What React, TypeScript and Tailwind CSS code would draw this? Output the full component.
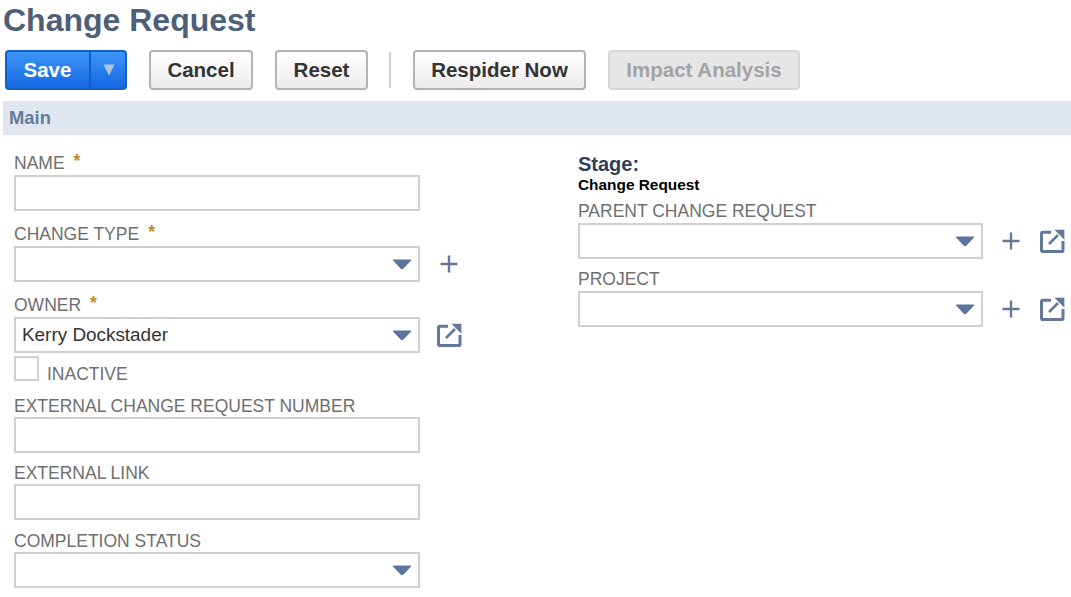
import React from "react";

const FONT = "font-['Liberation_Sans',Arial,sans-serif]";

function Caret() {
  return (
    <svg width="20" height="11" viewBox="0 0 20 11" className="shrink-0">
      <path d="M1 1.5 Q0.5 0.5 2 0.5 H18 Q19.5 0.5 19 1.5 L11.5 9.5 Q10 10.8 8.5 9.5 Z" fill="#5b759f" />
    </svg>
  );
}

function PlusIcon() {
  return (
    <svg width="18" height="18" viewBox="0 0 18 18" className="shrink-0">
      <path d="M9 0.5 V17.5 M0.5 9 H17.5" stroke="#64799a" strokeWidth="2.4" fill="none" />
    </svg>
  );
}

function OpenIcon() {
  return (
    <svg width="25" height="24" viewBox="0 0 25 24" className="shrink-0">
      <path
        d="M11 3.2 H2.8 Q1.5 3.2 1.5 4.5 V21.2 Q1.5 22.5 2.8 22.5 H21.7 Q23 22.5 23 21.2 V12"
        stroke="#64799a"
        strokeWidth="3"
        fill="none"
      />
      <path d="M9 15 L18 6" stroke="#64799a" strokeWidth="2.6" fill="none" />
      <path d="M14.5 0.8 H24.4 V10.7 Z" fill="#64799a" />
    </svg>
  );
}

function Label({ text, required, tight }: { text: string; required?: boolean; tight?: boolean }) {
  return (
    <div className={`flex items-center gap-[9px] text-[17.5px] leading-none text-[#6f6f6f] ${tight ? "h-[21px]" : "h-[23px]"}`}>
      <span>{text}</span>
      {required && <span className="text-[#c08a2e] font-bold -mt-1">*</span>}
    </div>
  );
}

function Box({ value, select, narrow }: { value?: string; select?: boolean; narrow?: boolean }) {
  return (
    <div
      className={`flex h-[36px] shrink-0 items-center justify-between border-2 border-[#d0d0d0] bg-white pl-[6px] pr-[6px] text-[18.9px] text-[#333] ${
        narrow ? "w-[405px]" : "w-[406px]"
      }`}
    >
      <span>{value}</span>
      {select && <Caret />}
    </div>
  );
}

function Field({
  label,
  required,
  value,
  select,
  plus,
  open,
  tight,
  narrow,
  className,
}: {
  label: string;
  required?: boolean;
  value?: string;
  select?: boolean;
  plus?: boolean;
  open?: boolean;
  tight?: boolean;
  narrow?: boolean;
  className?: string;
}) {
  return (
    <div className={className}>
      <Label text={label} required={required} tight={tight} />
      <div className="flex items-center">
        <Box value={value} select={select} narrow={narrow} />
        {plus && (
          <span className={narrow ? "ml-[19px] flex w-[18px]" : "ml-[20px] flex w-[18px]"}>
            <PlusIcon />
          </span>
        )}
        {open && (
          <span className={plus ? "ml-[20px] flex" : "ml-[17px] flex"}>
            <OpenIcon />
          </span>
        )}
      </div>
    </div>
  );
}

function Button({ children, disabled, className }: { children: string; disabled?: boolean; className: string }) {
  return (
    <button
      type="button"
      disabled={disabled}
      className={`h-[40px] rounded-[4px] border-2 text-[20.5px] font-bold ${
        disabled
          ? "border-[#d6d6d6] bg-[#e6e6e6] text-[#a3a3a3]"
          : "border-[#b3b3b3] bg-gradient-to-b from-white to-[#ececec] text-[#333]"
      } ${className}`}
    >
      {children}
    </button>
  );
}

export default function App() {
  return (
    <div className={`${FONT} h-[597px] w-[1071px] overflow-hidden bg-white`}>
      <h1 className="h-[50px] pl-[3px] text-[32px] font-bold leading-[40px] text-[#4d5f79]">Change Request</h1>

      <div className="flex h-[40px] items-center pl-[5px]">
        <div className="flex h-[40px] w-[122px] overflow-hidden rounded-[4px] border-2 border-[#125fca] bg-gradient-to-b from-[#3d95f8] to-[#1467e0] text-white">
          <span className="flex w-[82px] items-center justify-center pr-[1px] text-[20.5px] font-bold">Save</span>
          <span className="flex flex-1 items-center justify-center border-l-2 border-[#125fca] pl-[1px]">
            <svg width="12" height="12" viewBox="0 0 12 12">
              <path d="M0.5 0.5 H11.5 L6 11.5 Z" fill="#b0c3dc" />
            </svg>
          </span>
        </div>
        <Button className="ml-[22px] w-[104px]">Cancel</Button>
        <Button className="ml-[22px] w-[93px]">Reset</Button>
        <div className="ml-[21px] h-[36px] w-[2px] bg-[#cfcfcf]" />
        <Button className="ml-[22px] w-[173px]">Respider Now</Button>
        <Button disabled className="ml-[22px] w-[192px]">
          Impact Analysis
        </Button>
      </div>

      <div className="ml-[3px] mt-[11px] flex h-[34px] items-center bg-[#e0e6f0] pl-[6px] text-[18.4px] font-bold text-[#667a9b]">
        Main
      </div>

      <div className="flex pl-[14px] pt-[17px]">
        <div className="w-[564px] shrink-0">
          <Field label="NAME" required />
          <Field className="mt-[12px]" label="CHANGE TYPE" required select plus />
          <Field className="mt-[12px]" label="OWNER" required value="Kerry Dockstader" select open />
          <div className="mt-[3px] flex h-[30px] text-[17.5px] leading-none text-[#6f6f6f]">
            <span className="h-[25px] w-[25px] border-2 border-[#d0d0d0]" />
            <span className="ml-[8px] pt-[10px]">INACTIVE</span>
          </div>
          <Field className="mt-[10px]" label="EXTERNAL CHANGE REQUEST NUMBER" tight />
          <Field className="mt-[10px]" label="EXTERNAL LINK" tight />
          <Field className="mt-[11px]" label="COMPLETION STATUS" select tight />
        </div>

        <div className="flex-1">
          <div className="h-[23px] pt-[1px] text-[20px] font-bold leading-[22px] text-[#2d3f5e]">Stage:</div>
          <div className="h-[21px] text-[15.4px] font-bold leading-[19px] text-black">Change Request</div>
          <Field className="mt-[4px]" label="PARENT CHANGE REQUEST" select plus open narrow />
          <Field className="mt-[9px]" label="PROJECT" select plus open narrow />
        </div>
      </div>
    </div>
  );
}
